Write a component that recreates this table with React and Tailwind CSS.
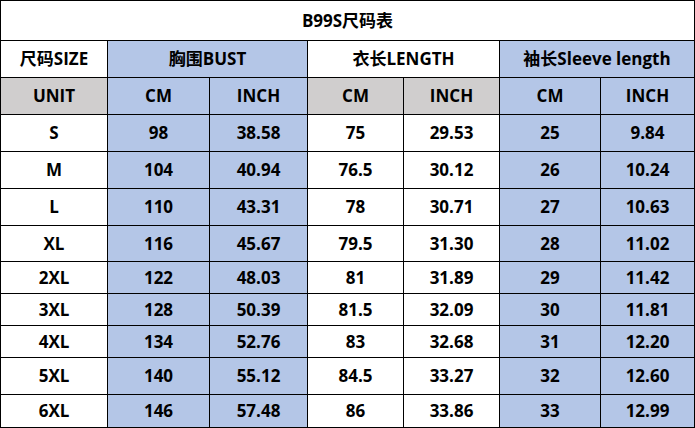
const BLUE = 'bg-[#b4c6e7]'
const GRAY = 'bg-[#d0cece]'
const WHITE = 'bg-white'

const rows = [
  ['S', '98', '38.58', '75', '29.53', '25', '9.84'],
  ['M', '104', '40.94', '76.5', '30.12', '26', '10.24'],
  ['L', '110', '43.31', '78', '30.71', '27', '10.63'],
  ['XL', '116', '45.67', '79.5', '31.30', '28', '11.02'],
  ['2XL', '122', '48.03', '81', '31.89', '29', '11.42'],
  ['3XL', '128', '50.39', '81.5', '32.09', '30', '11.81'],
  ['4XL', '134', '52.76', '83', '32.68', '31', '12.20'],
  ['5XL', '140', '55.12', '84.5', '33.27', '32', '12.60'],
  ['6XL', '146', '57.48', '86', '33.86', '33', '12.99'],
]

const colBg = [WHITE, BLUE, BLUE, WHITE, WHITE, BLUE, BLUE]

function Cell({ children, bg = WHITE, span = '' }) {
  return (
    <div className={`flex items-center justify-center ${bg} ${span}`}>
      {children}
    </div>
  )
}

export default function App() {
  return (
    <div
      className="grid h-[428px] w-[695px] grid-cols-[106px_101px_97px_95px_95px_100px_93px] grid-rows-[39px_36px_36px_36px_36px_36px_35px_31px_31px_31px_36px_32px] gap-px bg-black p-px text-[17px] font-bold text-black"
      style={{ fontFamily: '"Open Sans", "Noto Sans CJK SC", sans-serif' }}
    >
      <Cell span="col-span-7">B99S尺码表</Cell>
      <Cell>尺码SIZE</Cell>
      <Cell bg={BLUE} span="col-span-2">胸围BUST</Cell>
      <Cell span="col-span-2">衣长LENGTH</Cell>
      <Cell bg={BLUE} span="col-span-2">袖长Sleeve length</Cell>
      <Cell bg={GRAY}>UNIT</Cell>
      <Cell bg={BLUE}>CM</Cell>
      <Cell bg={BLUE}>INCH</Cell>
      <Cell bg={GRAY}>CM</Cell>
      <Cell bg={GRAY}>INCH</Cell>
      <Cell bg={BLUE}>CM</Cell>
      <Cell bg={BLUE}>INCH</Cell>
      {rows.map((row) => row.map((value, i) => (
        <Cell key={row[0] + i} bg={colBg[i]}>{value}</Cell>
      )))}
    </div>
  )
}
